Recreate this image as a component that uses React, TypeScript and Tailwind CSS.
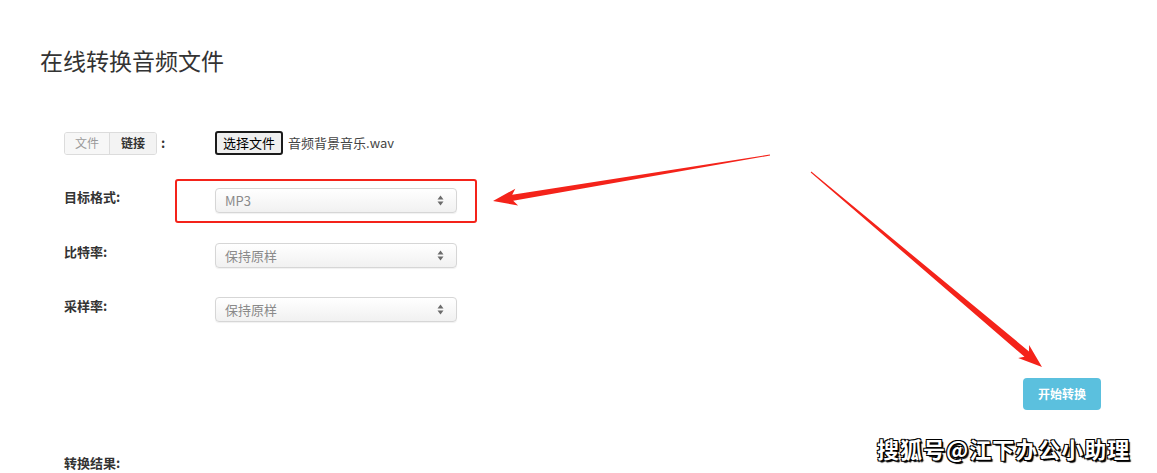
const FONT = "font-['Noto_Sans_CJK_SC','Noto_Sans',sans-serif]";

type Pt = [number, number];

// tapered annotation arrow: thin tail, thicker shaft, barbed head
function arrowPoints(tail: Pt, tip: Pt, tw: number, sw: number, hw: number, hl: number) {
  const dx = tip[0] - tail[0];
  const dy = tip[1] - tail[1];
  const len = Math.hypot(dx, dy);
  const ux = dx / len;
  const uy = dy / len;
  const nx = -uy;
  const ny = ux;
  const bx = tip[0] - ux * hl;
  const by = tip[1] - uy * hl;
  const barbX = bx - ux * 4;
  const barbY = by - uy * 4;
  const p = (x: number, y: number) => `${x.toFixed(1)},${y.toFixed(1)}`;
  return [
    p(tail[0] + (nx * tw) / 2, tail[1] + (ny * tw) / 2),
    p(bx + (nx * sw) / 2, by + (ny * sw) / 2),
    p(barbX + (nx * hw) / 2, barbY + (ny * hw) / 2),
    p(tip[0], tip[1]),
    p(barbX - (nx * hw) / 2, barbY - (ny * hw) / 2),
    p(bx - (nx * sw) / 2, by - (ny * sw) / 2),
    p(tail[0] - (nx * tw) / 2, tail[1] - (ny * tw) / 2),
  ].join(" ");
}

function SelectBox({ value }: { value: string }) {
  return (
    <div className="w-[242px] h-[25px] flex items-center justify-between pl-[9px] pr-[12px] rounded-[4px] border border-[#d6d6d6] bg-gradient-to-b from-white to-[#f1f1f1] shadow-[0_1px_1px_rgba(0,0,0,0.06)]">
      <span className="text-[13px] text-[#8a8a8a] leading-none">{value}</span>
      <svg width="7" height="11" viewBox="0 0 7 11">
        <path d="M3.5 0.5 L6.5 4.5 L0.5 4.5 Z" fill="#6b6b6b" />
        <path d="M3.5 10.5 L6.5 6.5 L0.5 6.5 Z" fill="#6b6b6b" />
      </svg>
    </div>
  );
}

function Row({ label, children, className = "" }: { label: string; children: React.ReactNode; className?: string }) {
  return (
    <div className={`grid grid-cols-[151px_1fr] items-start ${className}`}>
      <div className="text-[13px] font-bold text-[#333] leading-[18px]">{label}</div>
      <div>{children}</div>
    </div>
  );
}

export default function App() {
  const red = "#f4231a";
  return (
    <div className={`relative w-[1157px] h-[473px] overflow-hidden bg-white ${FONT}`}>
      <div className="pl-[40px] pt-[45px]">
        <h1 className="text-[23px] leading-[30px] font-normal text-[#333]">在线转换音频文件</h1>

        <div className="ml-[24px] mt-[56px]">
          {/* source */}
          <div className="grid grid-cols-[151px_1fr] items-center h-[24px]">
            <div className="flex items-center">
              <div className="flex h-[23px] border border-[#dcdcdc] rounded-[3px] overflow-hidden text-[12px]">
                <span className="w-[45px] flex items-center justify-center bg-[#f7f7f7] text-[#9a9a9a] border-r border-[#dcdcdc]">
                  文件
                </span>
                <span className="w-[46px] flex items-center justify-center bg-[#f3f3f3] text-[#333] font-bold">
                  链接
                </span>
              </div>
              <span className="ml-[4px] text-[13px] font-bold text-[#333]">:</span>
            </div>
            <div className="flex items-center">
              <span className="h-[24px] px-[6px] flex items-center text-[13px] text-black bg-[#efefef] border-2 border-[#1b1b1b] rounded-[3px]">
                选择文件
              </span>
              <span className="ml-[5px] text-[13px] text-[#444]">音频背景音乐.wav</span>
            </div>
          </div>

          <Row label="目标格式:" className="mt-[33px]">
            <SelectBox value="MP3" />
          </Row>
          <Row label="比特率:" className="mt-[30px]">
            <SelectBox value="保持原样" />
          </Row>
          <Row label="采样率:" className="mt-[29px]">
            <SelectBox value="保持原样" />
          </Row>

          <div className="flex justify-end pr-[56px] mt-[56px]">
            <button className="w-[78px] h-[32px] rounded-[4px] bg-[#5bc0de] text-white text-[12px] font-bold">
              开始转换
            </button>
          </div>

          <div className="mt-[43px] text-[13px] font-bold text-[#333] leading-[20px]">转换结果:</div>
        </div>
      </div>

      {/* annotation overlay */}
      <div className="absolute left-[175px] top-[179px] w-[302px] h-[44px] border-[2.5px] border-[#f4231a] rounded-[3px]" />
      <svg className="absolute inset-0 pointer-events-none" width="1157" height="473">
        <polygon points={arrowPoints([770, 155], [493, 201], 1, 6, 17, 20)} fill={red} />
        <polygon points={arrowPoints([811, 172], [1042, 367], 1, 7, 17, 20)} fill={red} />
      </svg>

      <div className="absolute left-[877px] top-[432px] text-[22px] font-bold text-white tracking-[1px] [text-shadow:1px_1px_0_#000,-1px_-1px_0_#000,1px_-1px_0_#000,-1px_1px_0_#000,2px_2px_1px_#000]">
        搜狐号@江下办公小助理
      </div>
    </div>
  );
}
